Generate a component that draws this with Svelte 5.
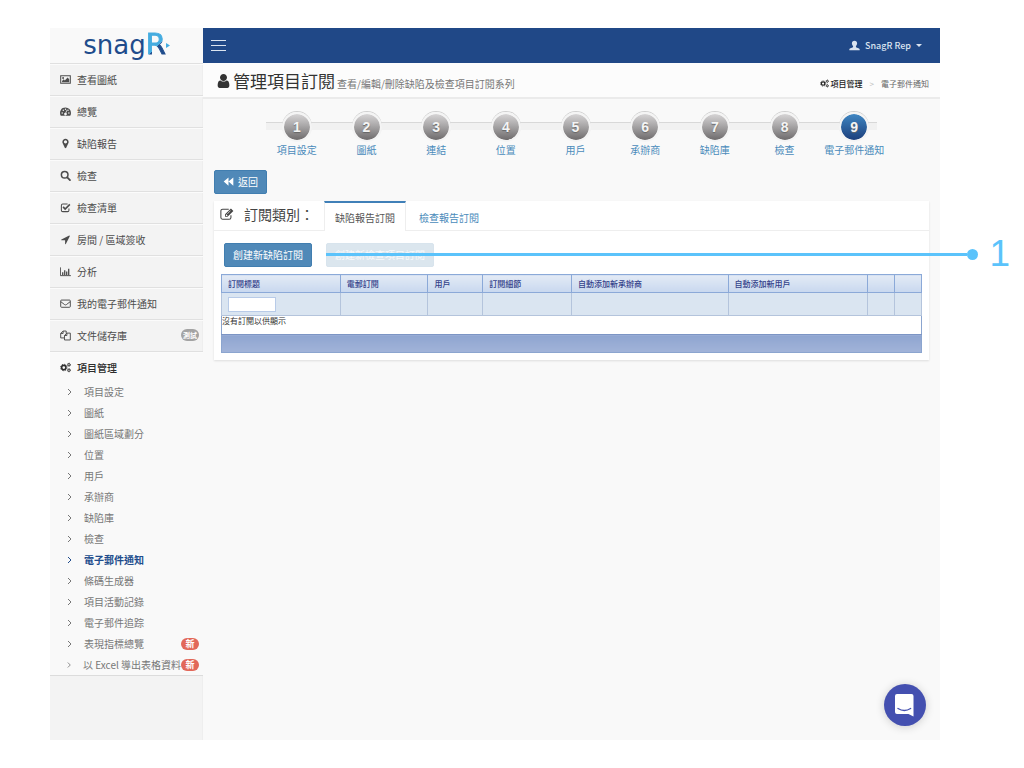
<script lang="ts">
  type IconName =
    | "image" | "dashboard" | "marker" | "search" | "check" | "arrow" | "chart"
    | "mail" | "files" | "cogs" | "user" | "person" | "backward" | "edit";

  interface MenuItem {
    label: string;
    icon: IconName;
    badge?: string;
  }

  const menu: MenuItem[] = [
    { label: "查看圖紙", icon: "image" },
    { label: "總覽", icon: "dashboard" },
    { label: "缺陷報告", icon: "marker" },
    { label: "檢查", icon: "search" },
    { label: "檢查清單", icon: "check" },
    { label: "房間 / 區域簽收", icon: "arrow" },
    { label: "分析", icon: "chart" },
    { label: "我的電子郵件通知", icon: "mail" },
    { label: "文件儲存庫", icon: "files", badge: "測試" },
  ];

  const submenu: { label: string; badge?: string }[] = [
    { label: "項目設定" },
    { label: "圖紙" },
    { label: "圖紙區域劃分" },
    { label: "位置" },
    { label: "用戶" },
    { label: "承辦商" },
    { label: "缺陷庫" },
    { label: "檢查" },
    { label: "電子郵件通知" },
    { label: "條碼生成器" },
    { label: "項目活動記錄" },
    { label: "電子郵件追踪" },
    { label: "表現指標總覽", badge: "新" },
    { label: "以 Excel 導出表格資料", badge: "新" },
  ];

  const steps = ["項目設定", "圖紙", "連結", "位置", "用戶", "承辦商", "缺陷庫", "檢查", "電子郵件通知"];

  const columns = [
    { label: "訂閱標題", weight: 119 },
    { label: "電郵訂閱", weight: 88 },
    { label: "用戶", weight: 55 },
    { label: "訂閱細節", weight: 89 },
    { label: "自動添加新承辦商", weight: 157 },
    { label: "自動添加新用戶", weight: 140 },
    { label: "", weight: 27 },
    { label: "", weight: 27 },
  ];
  const totalWeight = columns.reduce((sum, c) => sum + c.weight, 0);

  const tabs = ["缺陷報告訂閱", "檢查報告訂閱"];

  let activePage = $state("電子郵件通知");
  let activeTab = $state(0);
  let titleFilter = $state("");
</script>

{#snippet icon(name: IconName)}
  {#if name === "image"}
    <svg class="icon" viewBox="0 0 16 16"><path d="M1 2.5h14v11H1z" fill="none" stroke="currentColor" stroke-width="1.5" /><circle cx="4.5" cy="5.8" r="1.4" /><path d="M3 12v-2l2.4-2.2L7 9.300l4-4.300 2.400 2.500V12z" /></svg>
  {:else if name === "dashboard"}
    <svg class="icon" viewBox="0 0 16 16"><path fill-rule="evenodd" d="M8 2a8 8 0 0 1 8 8c0 1.600-.4 3-1.100 4H1.100A8 8 0 0 1 8 2zM3.200 9a1.100 1.100 0 1 0 0 2.200 1.100 1.100 0 0 0 0-2.200zm1.600-3.800a1.100 1.100 0 1 0 0 2.200 1.100 1.100 0 0 0 0-2.200zM8 3.500a1.100 1.100 0 1 0 0 2.200 1.100 1.100 0 0 0 0-2.200zm3.600 1.700a1.100 1.100 0 1 0 0 2.200 1.100 1.100 0 0 0 0-2.200zM12.900 9a1.100 1.100 0 1 0 0 2.200 1.100 1.100 0 0 0 0-2.200zM9.200 6.300 8 9.700a1.900 1.900 0 1 0 1 .3l1.200-3.400z" /></svg>
  {:else if name === "marker"}
    <svg class="icon" viewBox="0 0 1792 1792"><path d="M1152 640q0-106-75-181t-181-75-181 75-75 181 75 181 181 75 181-75 75-181zm256 0q0 109-33 179l-364 774q-16 33-47.500 52t-67.500 19-67.500-19-46.500-52l-365-774q-33-70-33-179 0-212 150-362t362-150 362 150 150 362z" /></svg>
  {:else if name === "search"}
    <svg class="icon" viewBox="0 0 16 16"><circle cx="6.800" cy="7" r="4.800" fill="none" stroke="currentColor" stroke-width="2.200" /><path d="m10.500 10.700 4 4" fill="none" stroke="currentColor" stroke-width="2.600" stroke-linecap="round" /></svg>
  {:else if name === "check"}
    <svg class="icon" viewBox="0 0 16 16"><path d="M13 9.500V12a2 2 0 0 1-2 2H4a2 2 0 0 1-2-2V5a2 2 0 0 1 2-2h7" fill="none" stroke="currentColor" stroke-width="1.500" /><path d="m4.500 7 3 3.200L14.300 3.500" fill="none" stroke="currentColor" stroke-width="2.400" /></svg>
  {:else if name === "arrow"}
    <svg class="icon" viewBox="0 0 1792 1792"><path d="M1593 349l-640 1280q-17 35-57 35-5 0-15-2-22-5-35.500-22.500t-13.500-39.500v-576h-576q-22 0-39.500-13.500t-22.500-35.500 4-42 29-30l1280-640q13-7 29-7 27 0 45 19 15 14 18.500 34.500t-6.500 39.500z" /></svg>
  {:else if name === "chart"}
    <svg class="icon" viewBox="0 0 16 16"><path d="M.6 2v12h15.200" fill="none" stroke="currentColor" stroke-width="1.400" /><path d="M3 9h1.900v4H3zm2.900-3h1.900v7H5.900zm2.900 2h1.900v5H8.800zm2.900-4h1.900v9h-1.900z" /></svg>
  {:else if name === "mail"}
    <svg class="icon" viewBox="0 0 16 16"><rect x="1" y="3" width="14" height="10.500" rx="1.200" fill="none" stroke="currentColor" stroke-width="1.400" /><path d="m1.400 5.500 5.400 4.200q1.200.8 2.400 0l5.400-4.200" fill="none" stroke="currentColor" stroke-width="1.400" /></svg>
  {:else if name === "files"}
    <svg class="icon" viewBox="0 0 16 16"><path d="M6 11.500H1V5l3.500-3.500H9V5M4.500 1.500V5H1M6.500 14.500V8L10 4.500h5v10zM10 4.500V8H6.500" fill="none" stroke="currentColor" stroke-width="1.400" stroke-linejoin="round" /></svg>
  {:else if name === "cogs"}
    <svg class="icon" viewBox="0 0 16 16"><circle cx="5.500" cy="8" r="3.100" fill="none" stroke="currentColor" stroke-width="2.200" /><circle cx="5.500" cy="8" r="4.700" fill="none" stroke="currentColor" stroke-width="1.300" stroke-dasharray="2 1.690" /><circle cx="13" cy="4" r="1.700" fill="none" stroke="currentColor" stroke-width="1.400" /><circle cx="13" cy="4" r="2.500" fill="none" stroke="currentColor" stroke-width=".8" stroke-dasharray="1.300 1.320" /><circle cx="13" cy="12" r="1.700" fill="none" stroke="currentColor" stroke-width="1.400" /><circle cx="13" cy="12" r="2.500" fill="none" stroke="currentColor" stroke-width=".8" stroke-dasharray="1.300 1.320" /></svg>
  {:else if name === "user"}
    <svg class="icon" viewBox="192 128 1408 1536"><path d="M1536 1399q0 109-62.500 187t-150.500 78h-854q-88 0-150.500-78t-62.500-187q0-85 8.500-160.500t31.500-152 58.500-131 94-89 134.500-34.500q131 128 313 128t313-128q76 0 134.500 34.500t94 89 58.500 131 31.500 152 8.500 160.500zm-256-887q0 159-112.500 271.500t-271.500 112.500-271.500-112.500-112.500-271.500 112.500-271.500 271.500-112.500 271.500 112.500 112.500 271.500z" /></svg>
  {:else if name === "person"}
    <svg class="icon" viewBox="0 0 16 16"><path d="M8 1c2.400 0 3.800 1.600 3.800 3.800 0 1.700-.7 3-1.700 3.900v1.500c0 .7 5.400 1.700 5.400 3.300V15H.5v-1.500c0-1.600 5.400-2.600 5.400-3.300V8.700c-1-.9-1.700-2.200-1.700-3.900C4.200 2.600 5.600 1 8 1z" /></svg>
  {:else if name === "backward"}
    <svg class="icon" viewBox="0 0 16 16"><path d="M8 2v12L1 8zM15 2v12L8 8z" /></svg>
  {:else if name === "edit"}
    <svg class="icon" viewBox="0 0 16 16"><path d="M12.500 9.500V12a2 2 0 0 1-2 2h-7.500a2 2 0 0 1-2-2V4.500a2 2 0 0 1 2-2h7" fill="none" stroke="currentColor" stroke-width="1.200" /><path fill-rule="evenodd" d="m12.500 1.700 2.800 2.800-6.700 6.700H5.800V8.400zM6.800 8.900v1.300h1.300l.6-.6-1.300-1.300zm5-4.900L8.300 7.500l.4.400 3.500-3.500z" /></svg>
  {/if}
{/snippet}

<div class="frame">
  <aside class="sidebar">
    <a class="logo" href="#home">
      <span>snag</span><span class="logo-mark">R</span>
      <svg class="logo-tip" viewBox="0 0 5 6" aria-hidden="true"><path d="M0 0l5 3-5 3z" /></svg>
    </a>
    <nav>
      {#each menu as item}
        <a class="menu-item" href="#menu">
          {@render icon(item.icon)}
          <span>{item.label}</span>
          {#if item.badge}<span class="badge muted">{item.badge}</span>{/if}
        </a>
      {/each}
      <a class="menu-item open" href="#menu">
        {@render icon("cogs")}
        <span>項目管理</span>
      </a>
      <div class="submenu">
        {#each submenu as item}
          <a class="sub-item" class:active={item.label === activePage} href="#page" onclick={() => (activePage = item.label)}>
            <svg class="chevron" viewBox="0 0 6 8"><path d="m1 1 3 3-3 3" /></svg>
            <span>{item.label}</span>
            {#if item.badge}<span class="badge">{item.badge}</span>{/if}
          </a>
        {/each}
      </div>
    </nav>
  </aside>

  <div class="content">
    <header class="topbar">
      <button class="toggle" aria-label="選單"><i></i><i></i><i></i></button>
      <button class="account">{@render icon("person")}<span>SnagR Rep</span><i class="caret"></i></button>
    </header>

    <div class="page-head">
      <h1>{@render icon("user")}管理項目訂閱 <small>查看/編輯/刪除缺陷及檢查項目訂閱系列</small></h1>
      <div class="crumbs">
        <a href="#project">{@render icon("cogs")}項目管理</a>
        <span class="sep">&gt;</span>
        <span>電子郵件通知</span>
      </div>
    </div>

    <main>
      <div class="steps">
        {#each steps as step, i}
          <a class="step" class:current={i === steps.length - 1} href="#step">
            <span class="dot">{i + 1}</span>
            <span class="step-label">{step}</span>
          </a>
        {/each}
      </div>

      <button class="btn">{@render icon("backward")}返回</button>

      <section class="panel">
        <div class="panel-head">
          <h2>{@render icon("edit")}訂閱類別：</h2>
          {#each tabs as tab, i}
            <button class="tab" class:active={i === activeTab} onclick={() => (activeTab = i)}>{tab}</button>
          {/each}
        </div>

        <div class="panel-body">
          <div class="actions">
            <button class="btn">創建新缺陷訂閱</button>
            <button class="btn" disabled>創建新檢查項目訂閱</button>
            <div class="callout"><i class="line"></i><i class="end"></i><span>1</span></div>
          </div>

          <table>
            <colgroup>
              {#each columns as col}
                <col style="width: {(col.weight / totalWeight) * 100}%" />
              {/each}
            </colgroup>
            <thead>
              <tr>
                {#each columns as col}<th>{col.label}</th>{/each}
              </tr>
              <tr class="filters">
                {#each columns as col, i}
                  <td>{#if i === 0}<input type="text" bind:value={titleFilter} aria-label={col.label} />{/if}</td>
                {/each}
              </tr>
            </thead>
            <tbody>
              <tr class="empty"><td colspan={columns.length}>沒有訂閱以供顯示</td></tr>
            </tbody>
            <tfoot>
              <tr><td colspan={columns.length}></td></tr>
            </tfoot>
          </table>
        </div>
      </section>
    </main>
  </div>

  <button class="chat" aria-label="聊天">
    <svg viewBox="0 0 22 24"><path d="M3 1h14.500q2 0 2 2v20.500L14.500 21H3q-2 0-2-2V3q0-2 2-2z" fill="#fff" /><path d="M4 15.500q6.300 4 12.600 0" fill="none" stroke="#4450b0" stroke-width="1.400" stroke-linecap="round" /></svg>
  </button>
</div>

<style>
  :global(body) {
    background: #fff;
    font-family: "Noto Sans CJK TC", "Noto Sans", sans-serif;
    font-size: 10px;
    color: #444;
  }

  .frame {
    position: relative;
    display: flex;
    box-sizing: border-box;
    min-height: calc(100vh - 56px);
    margin: 28px 84px 28px 50px;
    background: #f9f9f9;
  }

  a {
    color: inherit;
    text-decoration: none;
  }

  button {
    font-family: inherit;
    font-size: 10px;
    cursor: pointer;
  }

  .icon {
    width: 11px;
    height: 11px;
    flex-shrink: 0;
    fill: currentColor;
  }

  .sidebar {
    width: 153px;
    flex-shrink: 0;
    background: #f3f3f3;
    box-shadow: inset -1px 0 #eee;
  }

  .logo {
    display: flex;
    align-items: baseline;
    justify-content: center;
    height: 35px;
    background: #f9f9f9;
    font-family: "DejaVu Sans", sans-serif;
    font-size: 26px;
    line-height: 32px;
    color: #204c8c;
  }

  .logo-mark {
    font-size: 29px;
    color: transparent;
    background: linear-gradient(135deg, #45ace0 56%, #204c8c 56%);
    background-clip: text;
    -webkit-text-stroke: 1px transparent;
  }

  .logo-tip {
    width: 4px;
    height: 5px;
    align-self: center;
    fill: #45ace0;
  }

  .menu-item {
    display: flex;
    align-items: center;
    gap: 6px;
    box-sizing: border-box;
    height: 32px;
    padding: 0 4px 1px 10px;
    border-top: 1px solid #e0e0e0;
    box-shadow: inset 0 1px #fbfbfb;
    color: #4c4c4c;
  }

  .menu-item.open {
    background: #f9f9f9;
    color: #2c2c2c;
    font-weight: 500;
  }

  .submenu {
    margin-top: -2px;
    background: #f9f9f9;
    border-bottom: 1px solid #dcdcdc;
  }

  .sub-item {
    display: flex;
    align-items: center;
    height: 21px;
    padding: 0 4px 0 17px;
    color: #777;
    white-space: nowrap;
  }

  .sub-item.active {
    color: #204c8c;
    font-weight: 700;
  }

  .chevron {
    width: 6px;
    height: 8px;
    margin-right: 11px;
    fill: none;
    stroke: currentColor;
    stroke-width: 1;
  }

  .badge {
    width: 18px;
    height: 12px;
    flex-shrink: 0;
    margin-left: auto;
    border-radius: 6px;
    background: #e2685a;
    color: #fff;
    font-size: 9px;
    font-weight: 700;
    line-height: 12px;
    text-align: center;
  }

  .badge.muted {
    background: #a3a3a3;
    font-size: 7px;
  }

  .content {
    flex: 1;
    min-width: 0;
  }

  .topbar {
    display: flex;
    align-items: center;
    justify-content: space-between;
    height: 35px;
    padding: 0 18px 0 8px;
    background: #204887;
  }

  .toggle {
    display: grid;
    gap: 4px;
    width: 15px;
    padding: 0;
    border: 0;
    background: none;
  }

  .toggle i {
    height: 1px;
    background: #dbe4f0;
  }

  .account {
    display: flex;
    align-items: center;
    gap: 5px;
    padding: 0;
    border: 0;
    background: none;
    color: #dbe4f0;
    font-size: 9px;
    font-weight: 500;
  }

  .caret {
    border: 3px solid transparent;
    border-top-color: currentColor;
    border-bottom: 0;
  }

  .page-head {
    display: flex;
    align-items: center;
    justify-content: space-between;
    box-sizing: border-box;
    height: 36px;
    padding: 5px 11px 0 14px;
    background: #fcfcfc;
    border-bottom: 2px solid #ebebeb;
  }

  h1 {
    display: flex;
    align-items: baseline;
    margin: 0;
    font-size: 17px;
    font-weight: 400;
    line-height: 30px;
    color: #333;
  }

  h1 .icon {
    width: 13px;
    height: 14px;
    margin-right: 3px;
  }

  small {
    margin-left: 2px;
    font-size: 10px;
    color: #777;
  }

  .crumbs {
    display: flex;
    align-items: center;
    gap: 7px;
    padding-top: 2px;
    font-size: 8px;
    color: #666;
  }

  .crumbs a {
    display: flex;
    align-items: center;
    gap: 2px;
    color: #222;
    font-weight: 500;
  }

  .crumbs .icon {
    width: 9px;
    height: 9px;
  }

  .sep {
    color: #bbb;
  }

  main {
    padding: 13px 11px 0;
  }

  .steps {
    display: flex;
    margin: 0 40px 13px 48px;
  }

  .step {
    display: flex;
    flex: 1;
    flex-direction: column;
    align-items: center;
    color: #4a8bbb;
    white-space: nowrap;
    background: linear-gradient(#d8d8d8, #d8d8d8) 0 10px / 100% 1px no-repeat, linear-gradient(#f1f1f1, #f1f1f1) 0 11px / 100% 7px no-repeat;
  }

  .step:first-child {
    background-position: 4px 10px, 4px 11px;
  }

  .step:last-child {
    background-size: 58px 1px, 58px 7px;
  }

  .dot {
    width: 26px;
    height: 26px;
    margin: 0 0 1px;
    border: 2px solid #f4f4f4;
    border-radius: 50%;
    background: linear-gradient(#d6d4d5, #a9a7a8 45%, #6e6b6c) padding-box;
    box-shadow: 0 -1px #cfcfcf;
    color: #f4f4f4;
    font-family: "Liberation Sans", sans-serif;
    font-size: 14px;
    font-weight: 700;
    line-height: 26px;
    text-align: center;
    text-shadow: 0 1px 1px #666;
  }

  .current .dot {
    background: linear-gradient(#3f86c2, #1c3f7c) padding-box;
  }

  .step-label {
    line-height: 14px;
  }

  .btn {
    display: flex;
    align-items: center;
    gap: 4px;
    height: 24px;
    padding: 0 8px 1px;
    border: 1px solid #417eb0;
    border-radius: 2px;
    background: #5089b8;
    color: #fff;
  }

  .btn:disabled {
    border-color: #d8e4ed;
    background: #dbe6ee;
    color: #f8fafc;
  }

  .panel {
    margin-top: 7px;
    background: #fff;
    box-shadow: 0 1px 2px #ddd;
  }

  .panel-head {
    display: flex;
    gap: 2px;
    height: 30px;
    box-sizing: border-box;
    border-bottom: 1px solid #eee;
  }

  h2 {
    display: flex;
    align-items: center;
    width: 108px;
    gap: 10px;
    padding: 0 0 3px 6px;
    box-sizing: border-box;
    margin: 0;
    font-size: 14px;
    font-weight: 400;
    white-space: nowrap;
  }

  h2 .icon {
    width: 14px;
    height: 14px;
  }

  .tab {
    height: 30px;
    padding: 0 10px;
    border: 1px solid transparent;
    border-top: 2px solid transparent;
    border-bottom: 0;
    background: none;
    color: #4a8bbb;
  }

  .tab.active {
    border-color: #4080b8 #eee;
    background: #fff;
    color: #555;
  }

  .panel-body {
    padding: 12px 7px 7px;
  }

  .actions {
    position: relative;
    display: flex;
    gap: 14px;
    margin: 0 0 7px 3px;
  }

  .callout {
    position: absolute;
    top: -10px;
    right: -88px;
    left: 102px;
    display: flex;
    align-items: center;
    height: 42px;
    color: #5bc3fb;
    font-family: "Liberation Sans", sans-serif;
    font-size: 37px;
    pointer-events: none;
  }

  .line {
    flex: 1;
    height: 3px;
    background: #5bc3fb;
  }

  .end {
    width: 11px;
    height: 11px;
    margin-right: 11px;
    border-radius: 50%;
    background: #5bc3fb;
  }

  table {
    width: 100%;
    table-layout: fixed;
    border-collapse: collapse;
    border: 1px solid #8ba5cf;
    font-size: 8px;
  }

  th {
    height: 17px;
    padding: 0 6px;
    border: 1px solid #8ba9d8;
    background: linear-gradient(#e3eaf5, #c8d8ef);
    color: #33418a;
    font-weight: 500;
    line-height: 12px;
    text-align: left;
    white-space: nowrap;
  }

  .filters td {
    height: 22px;
    padding: 0 6px;
    border: 1px solid #b4c4dc;
    background: #dae5f1;
  }

  input {
    display: block;
    box-sizing: border-box;
    width: 48px;
    height: 15px;
    padding: 0 2px;
    border: 1px solid #b8cbe8;
    background: #fff;
    font-family: inherit;
    font-size: 8px;
  }

  .empty td {
    height: 18px;
    padding: 0;
    line-height: 10px;
    vertical-align: top;
    color: #333;
  }

  tfoot td {
    height: 17px;
    padding: 0;
    border-top: 1px solid #7c95c4;
    background: linear-gradient(#8fa5d0, #a1b3d9);
  }

  .chat {
    position: absolute;
    right: 14px;
    bottom: 14px;
    display: grid;
    place-items: center;
    width: 42px;
    height: 42px;
    padding: 0;
    border: 0;
    border-radius: 50%;
    background: #4450b0;
    box-shadow: 0 1px 8px #ccc;
  }

  .chat svg {
    width: 22px;
    height: 24px;
  }
</style>
